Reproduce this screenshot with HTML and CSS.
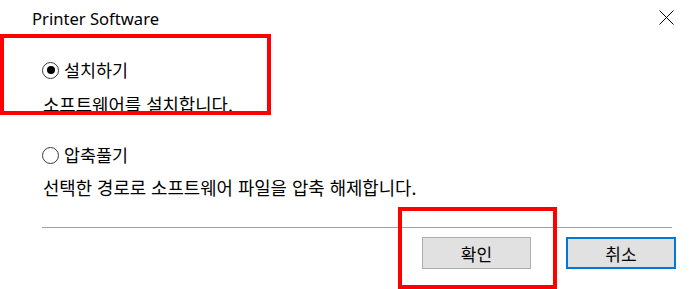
FILE: index.html
```html
<!DOCTYPE html>
<html lang="ko">
<head>
<meta charset="utf-8">
<title>Printer Software</title>
<link rel="stylesheet" href="styles.css">
</head>
<body>
<div class="dialog">
  <div class="titlebar">
    <span class="title">Printer Software</span>
    <svg class="close" width="15" height="15" viewBox="0 0 15 15" aria-hidden="true">
      <path d="M0.5 0.5 L14.5 14.5 M14.5 0.5 L0.5 14.5" stroke="#000" stroke-width="1" fill="none"/>
    </svg>
  </div>
  <div class="content">
    <label class="option first">
      <span class="radio checked"><span class="dot"></span></span>
      <span class="label">설치하기</span>
    </label>
    <p class="desc first-desc">소프트웨어를 설치합니다.</p>
    <label class="option second">
      <span class="radio"></span>
      <span class="label">압축풀기</span>
    </label>
    <p class="desc second-desc">선택한 경로로 소프트웨어 파일을 압축 해제합니다.</p>
  </div>
  <div class="separator"></div>
  <div class="buttons">
    <button class="btn ok">확인</button>
    <button class="btn cancel">취소</button>
  </div>
  <div class="mark mark-option"></div>
  <div class="mark mark-ok"></div>
</div>
</body>
</html>
```

FILE: styles.css
```css
html, body {
  margin: 0;
  padding: 0;
  background: #fff;
}
.dialog {
  position: relative;
  width: 690px;
  height: 289px;
  overflow: hidden;
  font-family: "Noto Sans CJK KR", "Noto Sans", sans-serif;
  color: #000;
}
.titlebar {
  height: 38px;
  display: flex;
  align-items: flex-start;
  justify-content: space-between;
}
.title {
  font-family: "Noto Sans", "Open Sans", sans-serif;
  font-size: 16.6px;
  line-height: 22px;
  margin-top: 8px;
  margin-left: 32px;
  color: #000;
}
.close {
  margin-top: 10px;
  margin-right: 16px;
}
.content {
  padding-left: 42px;
  display: flex;
  flex-direction: column;
}
.option {
  display: flex;
  align-items: center;
  height: 24px;
  gap: 5px;
  font-size: 17.4px;
}
.option.first { margin-top: 20px; }
.option.second { margin-top: 27px; }
.radio {
  width: 17px;
  height: 17px;
  border: 1.5px solid #3a3a3a;
  border-radius: 50%;
  display: flex;
  align-items: center;
  justify-content: center;
  box-sizing: border-box;
}
.dot {
  width: 8px;
  height: 8px;
  border-radius: 50%;
  background: #000;
}
.label {
  line-height: 24px;
}
.desc {
  margin: 0 0 0 1px;
  font-size: 17.8px;
  line-height: 24px;
  height: 24px;
}
.first-desc { margin-top: 10px; }
.second-desc { margin-top: 8px; }
.separator {
  margin: 28px 18px 0 42px;
  height: 1px;
  background: #a0a0a0;
}
.buttons {
  display: flex;
  justify-content: flex-end;
  gap: 35px;
  margin-top: 9px;
  padding-right: 14px;
}
.btn {
  box-sizing: border-box;
  height: 32px;
  background: #e1e1e1;
  border: 1px solid #adadad;
  font-family: "Noto Sans CJK KR", sans-serif;
  font-size: 17px;
  color: #000;
  padding: 0;
}
.btn.ok { width: 109px; }
.btn.cancel {
  width: 110px;
  border: 2px solid #0078d7;
}
.mark {
  position: absolute;
  border: 4px solid #ff0000;
  box-sizing: border-box;
}
.mark-option {
  left: 0;
  top: 34px;
  width: 271px;
  height: 81px;
}
.mark-ok {
  left: 398px;
  top: 207px;
  width: 159px;
  height: 82px;
}
```
